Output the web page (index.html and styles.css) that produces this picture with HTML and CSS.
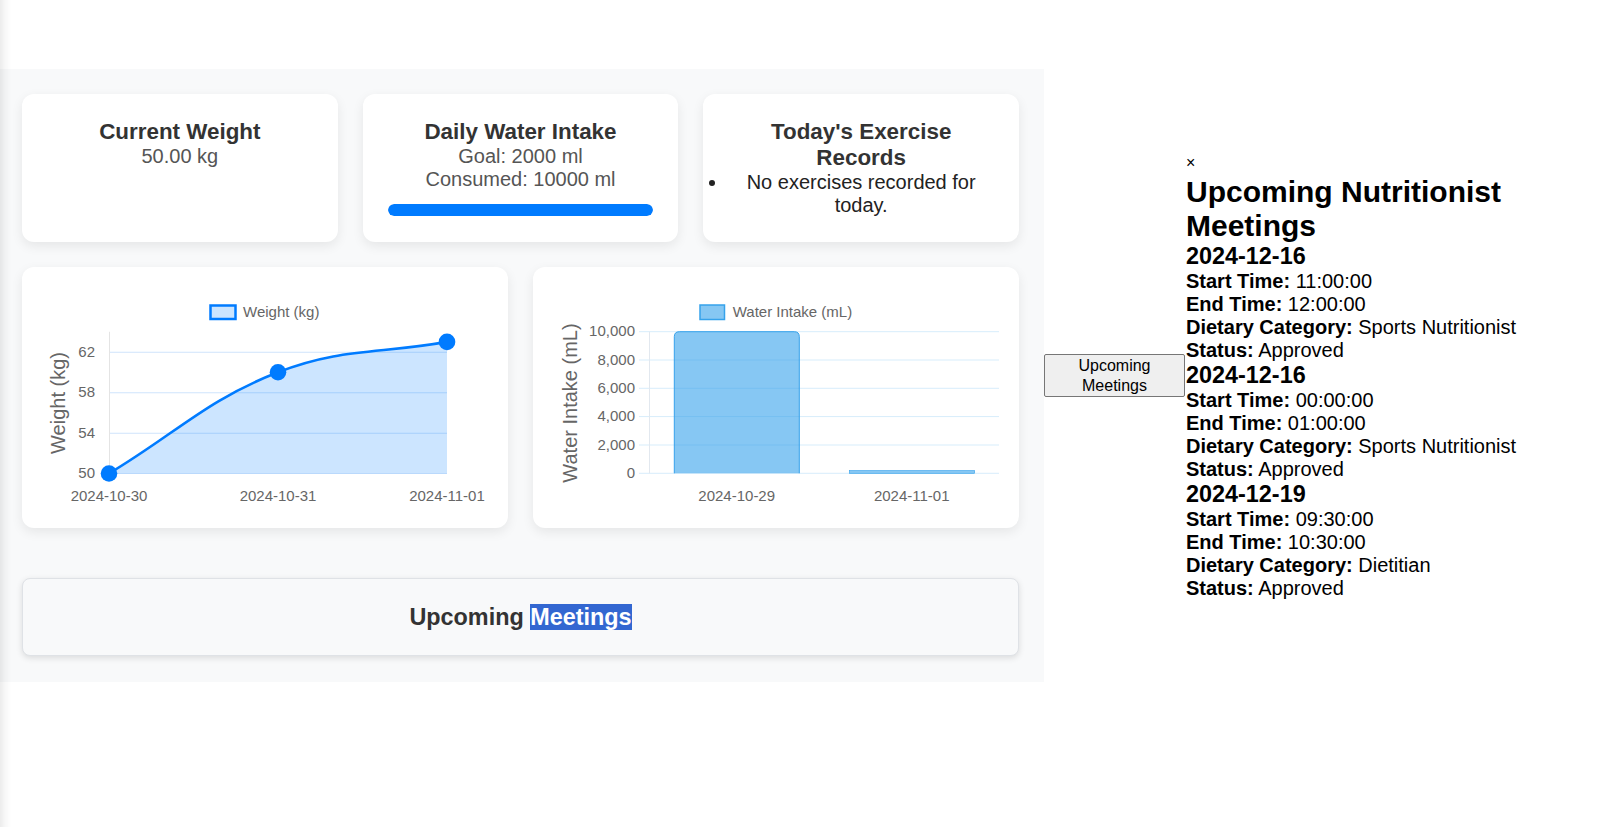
FILE: index.html
```html
<!DOCTYPE html>
<html lang="en">
<head>
<meta charset="utf-8">
<title>Dashboard</title>
<link rel="stylesheet" href="styles.css">
</head>
<body>
<div class="page">
  <main class="dashboard">
    <section class="stats">
      <div class="card">
        <h3>Current Weight</h3>
        <p>50.00 kg</p>
      </div>
      <div class="card">
        <h3>Daily Water Intake</h3>
        <p>Goal: 2000 ml</p>
        <p>Consumed: 10000 ml</p>
        <div class="progress"><div class="progress-fill" style="width:100%"></div></div>
      </div>
      <div class="card">
        <h3>Today's Exercise Records</h3>
        <ul class="exercise-list">
          <li>No exercises recorded for today.</li>
        </ul>
      </div>
    </section>

    <section class="charts">
      <div class="chart-card">
        <svg class="chart" width="446" height="221" viewBox="0 0 446 221">
          <rect x="168.5" y="18.5" width="25" height="13.5" fill="rgba(0,123,255,0.2)" stroke="#007bff" stroke-width="2.5"/>
          <text x="201" y="29.5" class="lbl">Weight (kg)</text>
          <g stroke="#cfe4fc" stroke-width="1">
            <line x1="67" y1="65.25" x2="405" y2="65.25"/>
            <line x1="67" y1="105.75" x2="405" y2="105.75"/>
            <line x1="67" y1="146.25" x2="405" y2="146.25"/>
            <line x1="67" y1="186.5" x2="405" y2="186.5"/>
          </g>
          <line x1="67.5" y1="44.75" x2="67.5" y2="186.5" stroke="#e4e4e4" stroke-width="1"/>
          <path d="M67,186.5 C134.6,146 163.8,113.4 236,85.25 C299,60.7 337.4,67 405,54.875 L405,186.5 Z" fill="rgba(0,123,255,0.2)"/>
          <path d="M67,186.5 C134.6,146 163.8,113.4 236,85.25 C299,60.7 337.4,67 405,54.875" fill="none" stroke="#007bff" stroke-width="2.6"/>
          <circle cx="67" cy="186.5" r="8.3" fill="#007bff"/>
          <circle cx="236" cy="85.25" r="8.3" fill="#007bff"/>
          <circle cx="405" cy="54.875" r="8.3" fill="#007bff"/>
          <g class="lbl" text-anchor="end">
            <text x="53" y="69.8">62</text>
            <text x="53" y="110.3">58</text>
            <text x="53" y="150.8">54</text>
            <text x="53" y="191">50</text>
          </g>
          <g class="lbl" text-anchor="middle">
            <text x="67" y="213.5">2024-10-30</text>
            <text x="236" y="213.5">2024-10-31</text>
            <text x="405" y="213.5">2024-11-01</text>
          </g>
          <text class="axis-title" text-anchor="middle" transform="translate(23,116) rotate(-90)">Weight (kg)</text>
        </svg>
      </div>
      <div class="chart-card">
        <svg class="chart" width="446" height="221" viewBox="0 0 446 221">
          <rect x="147" y="18" width="24.5" height="14.5" fill="rgba(54,162,235,0.6)" stroke="#36a2eb" stroke-width="1.5"/>
          <text x="179.7" y="29.5" class="lbl">Water Intake (mL)</text>
          <g stroke="rgba(54,162,235,0.2)" stroke-width="1">
            <line x1="86" y1="44.7" x2="446" y2="44.7"/>
            <line x1="86" y1="73" x2="446" y2="73"/>
            <line x1="86" y1="101.3" x2="446" y2="101.3"/>
            <line x1="86" y1="129.6" x2="446" y2="129.6"/>
            <line x1="86" y1="158" x2="446" y2="158"/>
            <line x1="86" y1="186.3" x2="446" y2="186.3"/>
          </g>
          <line x1="96.5" y1="44.7" x2="96.5" y2="186.3" stroke="#e2e8ef" stroke-width="1"/>
          <path d="M121.3,186.3 V49.7 Q121.3,44.7 126.3,44.7 H241.3 Q246.3,44.7 246.3,49.7 V186.3" fill="rgba(54,162,235,0.6)" stroke="#36a2eb" stroke-width="1"/>
          <rect x="296.3" y="183.5" width="125.4" height="2.8" fill="rgba(54,162,235,0.6)" stroke="#36a2eb" stroke-width="0.6"/>
          <g class="lbl" text-anchor="end">
            <text x="82" y="49.2">10,000</text>
            <text x="82" y="77.5">8,000</text>
            <text x="82" y="105.8">6,000</text>
            <text x="82" y="134.1">4,000</text>
            <text x="82" y="162.5">2,000</text>
            <text x="82" y="190.8">0</text>
          </g>
          <g class="lbl" text-anchor="middle">
            <text x="183.7" y="213.5">2024-10-29</text>
            <text x="358.7" y="213.5">2024-11-01</text>
          </g>
          <text class="axis-title" text-anchor="middle" transform="translate(23.5,116) rotate(-90)">Water Intake (mL)</text>
        </svg>
      </div>
    </section>

    <section class="meetings-box">
      <h3>Upcoming <span class="selected">Meetings</span></h3>
    </section>
  </main>

  <button class="meetings-btn" type="button">Upcoming Meetings</button>

  <aside class="modal">
    <div class="close-row"><span class="close">&times;</span></div>
    <h2>Upcoming Nutritionist Meetings</h2>
    <div class="meeting">
      <h3>2024-12-16</h3>
      <p><strong>Start Time:</strong> 11:00:00</p>
      <p><strong>End Time:</strong> 12:00:00</p>
      <p><strong>Dietary Category:</strong> Sports Nutritionist</p>
      <p><strong>Status:</strong> Approved</p>
    </div>
    <div class="meeting">
      <h3>2024-12-16</h3>
      <p><strong>Start Time:</strong> 00:00:00</p>
      <p><strong>End Time:</strong> 01:00:00</p>
      <p><strong>Dietary Category:</strong> Sports Nutritionist</p>
      <p><strong>Status:</strong> Approved</p>
    </div>
    <div class="meeting">
      <h3>2024-12-19</h3>
      <p><strong>Start Time:</strong> 09:30:00</p>
      <p><strong>End Time:</strong> 10:30:00</p>
      <p><strong>Dietary Category:</strong> Dietitian</p>
      <p><strong>Status:</strong> Approved</p>
    </div>
  </aside>
</div>
</body>
</html>
```
FILE: styles.css
```css
html, body {
  margin: 0;
  padding: 0;
  background: #ffffff;
}

body {
  font-family: "Liberation Sans", Arial, sans-serif;
  min-height: 827px;
  position: relative;
}

body::before {
  content: "";
  position: fixed;
  left: 0;
  top: 0;
  bottom: 0;
  width: 12px;
  background: linear-gradient(to right, rgba(0,0,0,0.075), rgba(0,0,0,0.03) 5px, rgba(0,0,0,0) 11px);
  pointer-events: none;
  z-index: 5;
}

.page {
  display: flex;
  align-items: center;
  padding-top: 69px;
}

.dashboard {
  flex: none;
  width: 1044px;
  box-sizing: border-box;
  background: #f8f9fa;
  padding: 25px 25px 26px 22px;
}

.stats {
  display: grid;
  grid-template-columns: repeat(3, 1fr);
  gap: 25px;
}

.card {
  background: #ffffff;
  border-radius: 12px;
  padding: 25px;
  box-shadow: 0 4px 12px rgba(0, 0, 0, 0.08);
  text-align: center;
}

.card h3 {
  margin: 0;
  font-size: 22.4px;
  font-weight: bold;
  color: #333333;
}

.card p {
  margin: 0;
  font-size: 20px;
  color: #555555;
}

.progress {
  margin-top: 13px;
  height: 12px;
  border-radius: 6px;
  background: #e9ecef;
  overflow: hidden;
}

.progress-fill {
  height: 100%;
  background: #007bff;
  border-radius: 6px;
}

.exercise-list {
  margin: 0;
  padding: 0;
  font-size: 20px;
  color: #222222;
}

.charts {
  display: grid;
  grid-template-columns: 1fr 1fr;
  gap: 25px;
  margin-top: 25px;
}

.chart-card {
  background: #ffffff;
  border-radius: 12px;
  padding: 20px;
  box-shadow: 0 4px 12px rgba(0, 0, 0, 0.08);
}

.chart {
  display: block;
  font-family: "Liberation Sans", Arial, sans-serif;
}

.lbl {
  font-size: 15px;
  fill: #666666;
}

.axis-title {
  font-size: 20px;
  fill: #666666;
}

.meetings-box {
  margin-top: 50px;
  background: #f8f9fa;
  border: 1px solid #dfe2e6;
  border-radius: 8px;
  padding: 24.5px 20px;
  box-shadow: 0 2px 6px rgba(0, 0, 0, 0.12);
  text-align: center;
}

.meetings-box h3 {
  margin: 0;
  font-size: 23.4px;
  color: #333333;
}

.selected {
  background: #3367d1;
  color: #ffffff;
}

.meetings-btn {
  flex: none;
  box-sizing: border-box;
  width: 141px;
  height: 43px;
  padding: 0 6px;
  font-family: "Liberation Sans", Arial, sans-serif;
  font-size: 16px;
  line-height: 20px;
  color: #000000;
  background: #efefef;
  border: 1px solid #767676;
  border-radius: 2px;
}

.modal {
  flex: none;
  width: 420px;
  margin-left: 1px;
  font-size: 20px;
  color: #000000;
}

.close {
  font-size: 16px;
  vertical-align: 2px;
}

.modal h2 {
  margin: 0;
  font-size: 30px;
  font-weight: bold;
}

.modal h3 {
  margin: 0;
  font-size: 23.4px;
  font-weight: bold;
}

.modal p {
  margin: 0;
}
```
